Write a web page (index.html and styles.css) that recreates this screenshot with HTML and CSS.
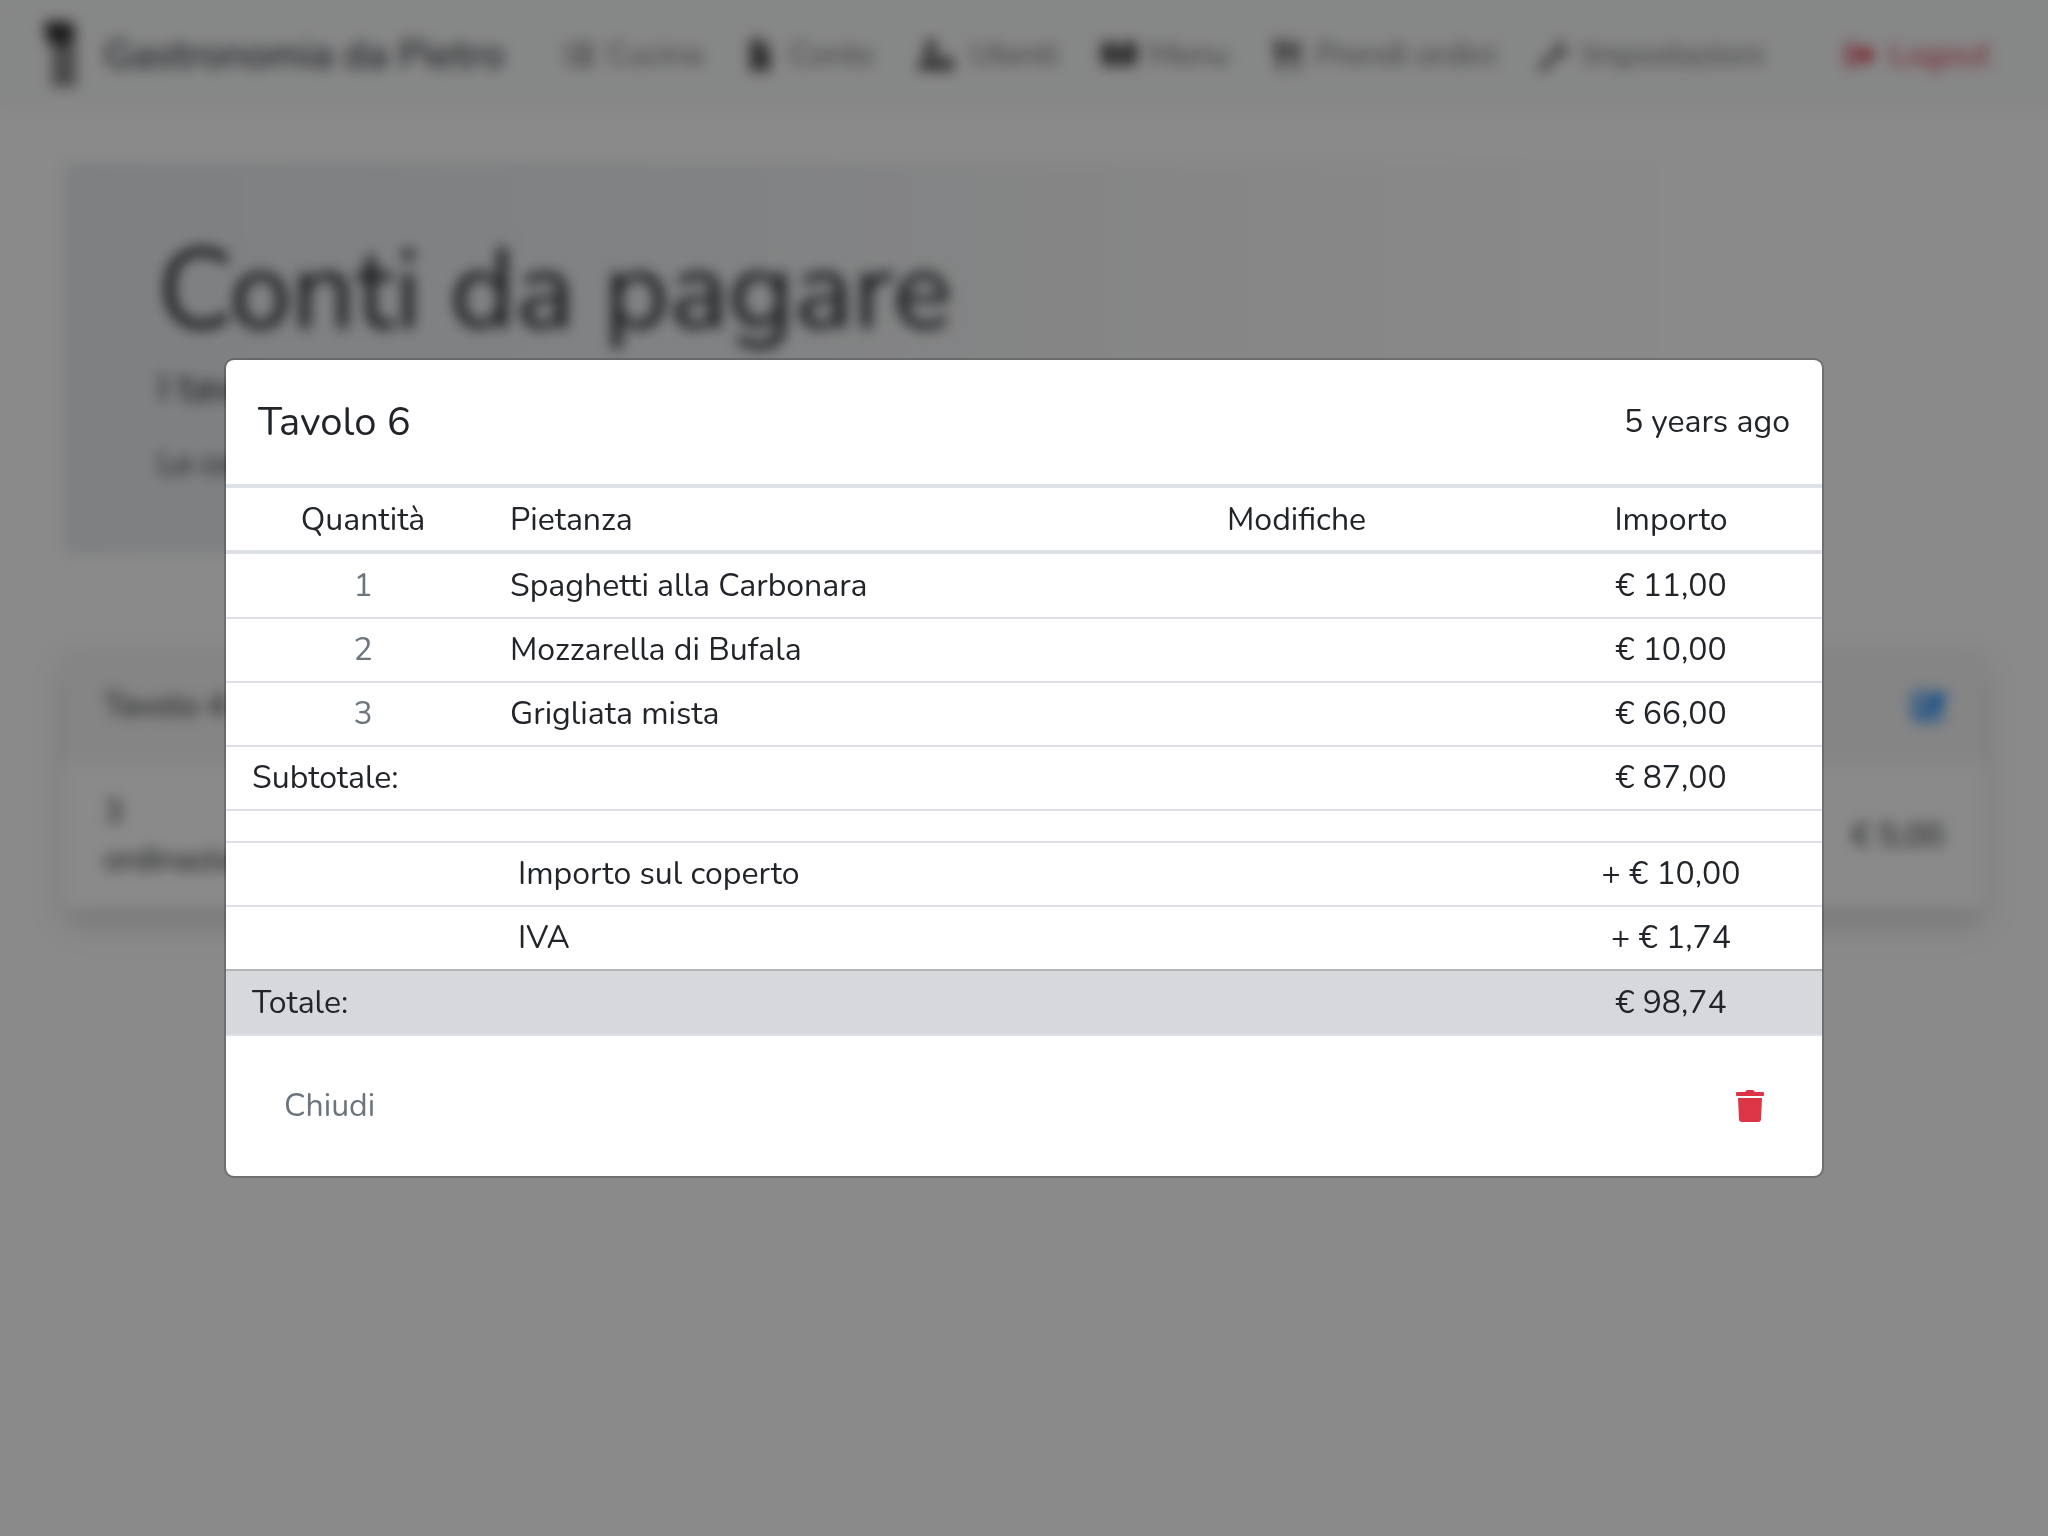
FILE: index.html
```html
<!DOCTYPE html>
<html lang="it">
<head>
<meta charset="utf-8">
<meta name="viewport" content="width=device-width, initial-scale=1">
<title>Conti da pagare</title>
<link rel="stylesheet" href="styles.css">
</head>
<body>
<div class="page">
  <header class="navbar">
    <a class="brand" href="#">
      <svg class="brand-icon" viewBox="0 0 38 68" aria-hidden="true"><path d="M3 10a9 9 0 0 1 16-8 9 9 0 0 1 14 9l-3 12H6z" fill="#333"/><path d="M10 23h24v43H10z" fill="#888"/></svg>
      <span>Gastronomia da Pietro</span>
    </a>
    <nav class="nav">
      <a class="nav-link" href="#"><svg class="icon" viewBox="0 0 32 32" aria-hidden="true"><path d="M1 5h5v4H1zM10 5h21v4H10zM1 14h5v4H1zM10 14h21v4H10zM1 23h5v4H1zM10 23h21v4H10z"/></svg>Cucina</a>
      <a class="nav-link" href="#"><svg class="icon dark" viewBox="0 0 32 32" aria-hidden="true"><path d="M5 0h12v9h8v23H5zM19 0l6 7h-6z"/></svg>Conto</a>
      <a class="nav-link" href="#"><svg class="icon icon-wide dark" viewBox="0 0 40 32" aria-hidden="true"><circle cx="14" cy="8" r="7"/><path d="M1 31c0-10 5-14 13-14 5 0 8 2 10 5a7 7 0 1 1 3 9z"/></svg>Utenti</a>
      <a class="nav-link" href="#"><svg class="icon icon-book dark" viewBox="2 0 36 32" aria-hidden="true"><path d="M2 3c7-1 13 0 17 3v23c-4-3-10-4-17-3zM38 3c-7-1-13 0-17 3v23c4-3 10-4 17-3z"/></svg>Menu</a>
      <a class="nav-link" href="#"><svg class="icon dark" viewBox="0 0 32 32" aria-hidden="true"><path d="M3 0h3v9h2V0h3v9h2V0h3v11c0 3-2 5-4 6v15H7V17c-2-1-4-3-4-6zM28 0v32h-4V20h-5C19 8 22 1 28 0z"/></svg>Prendi ordini</a>
      <a class="nav-link" href="#"><svg class="icon dark" viewBox="0 0 32 32" aria-hidden="true"><path d="M31 7a9 9 0 0 1-12 9L6 31a3 3 0 0 1-5-5l15-13A9 9 0 0 1 25 1l-5 5 1 5 5 1z"/></svg>Impostazioni</a>
    </nav>
    <a class="nav-link logout" href="#"><svg class="icon" viewBox="0 0 32 32" aria-hidden="true"><path d="M10 4H4a3 3 0 0 0-3 3v18a3 3 0 0 0 3 3h6v-4H5V8h5zM18 5l13 11-13 11v-7H9v-8h9z"/></svg>Logout</a>
  </header>
  <main class="content">
    <section class="jumbotron">
      <h1>Conti da pagare</h1>
      <p class="lead">I tavoli</p>
      <p class="note">Le comande</p>
    </section>
    <article class="card">
      <header class="card-header">
        <span>Tavolo 4</span>
        <a href="#" aria-label="Apri il conto"><svg class="edit-icon" viewBox="0 0 44 40" aria-hidden="true"><path d="M6 3h20l-5 5H7v25h25V23l5-5v15a5 5 0 0 1-5 5H6a5 5 0 0 1-5-5V8a5 5 0 0 1 5-5z"/><path d="M34 1l9 8-20 19-11 3 3-11z"/></svg></a>
      </header>
      <div class="card-body">
        <span class="orders">3 ordinazioni</span>
        <span>€ 5,00</span>
      </div>
    </article>
  </main>
</div>
<div class="backdrop">
  <section class="modal" role="dialog" aria-modal="true" aria-labelledby="bill-title">
    <header class="modal-header">
      <h2 id="bill-title">Tavolo 6</h2>
      <span>5 years ago</span>
    </header>
    <table class="bill">
      <colgroup><col class="col-qty"><col><col class="col-notes"><col class="col-amount"></colgroup>
      <thead>
        <tr><th class="center">Quantità</th><th>Pietanza</th><th class="center">Modifiche</th><th class="center">Importo</th></tr>
      </thead>
      <tbody>
        <tr><td class="center muted">1</td><td>Spaghetti alla Carbonara</td><td></td><td class="center">€ 11,00</td></tr>
        <tr><td class="center muted">2</td><td>Mozzarella di Bufala</td><td></td><td class="center">€ 10,00</td></tr>
        <tr><td class="center muted">3</td><td>Grigliata mista</td><td></td><td class="center">€ 66,00</td></tr>
        <tr><td class="label" colspan="3">Subtotale:</td><td class="center">€ 87,00</td></tr>
        <tr class="spacer"><td colspan="4"></td></tr>
        <tr><td></td><td class="extra" colspan="2">Importo sul coperto</td><td class="center">+ € 10,00</td></tr>
        <tr><td></td><td class="extra" colspan="2">IVA</td><td class="center">+ € 1,74</td></tr>
        <tr class="total"><td class="label" colspan="3">Totale:</td><td class="center">€ 98,74</td></tr>
      </tbody>
    </table>
    <footer class="modal-footer">
      <button class="btn muted" type="button">Chiudi</button>
      <button class="btn" type="button" aria-label="Elimina"><svg class="trash" viewBox="0 0 28 32" aria-hidden="true"><path d="M1 2h8l1-1 1-1h6l1 1 1 1h8q1 0 1 1v2q0 1-1 1H1Q0 6 0 5V3q0-1 1-1zM2 8h24l-1 21q0 3-3 3H6q-3 0-3-3z"/></svg></button>
    </footer>
  </section>
</div>
</body>
</html>
```
FILE: styles.css
```css
* { box-sizing: border-box; }
body {
  margin: 0;
  background: #fff;
  color: #212529;
  font: 32px/48px Nunito, Lato, sans-serif;
}
h1, h2, p { margin: 0; font-weight: 400; }
a { color: inherit; text-decoration: none; }
svg { display: block; flex: none; }

.navbar {
  display: flex;
  align-items: center;
  height: 110px;
  padding: 0 58px 0 42px;
  background: #f8f9fa;
}
.brand {
  display: flex;
  align-items: center;
  gap: 24px;
  margin-right: 58px;
  font-size: 40px;
  white-space: nowrap;
}
.brand-icon { width: 38px; height: 68px; }
.nav { display: flex; flex: 1; gap: 42px; }
.nav-link {
  display: flex;
  align-items: center;
  gap: 12px;
  color: #777;
  white-space: nowrap;
}
.icon { width: 32px; height: 32px; fill: currentColor; }
.icon-wide { width: 42px; }
.icon-book { width: 36px; }
.icon.dark { fill: #555; }
.logout, .logout .icon { color: #dc3545; }

.content { padding: 52px 64px; }
.jumbotron {
  height: 392px;
  margin-bottom: 94px;
  padding: 62px 94px;
  background: linear-gradient(to right, #e9ecef, #eff1f3 35%, #f8f8f8 60%, #fff 85%);
}
.jumbotron h1 { font-size: 112px; line-height: 136px; }
.lead { margin: 4px 0 28px; font-size: 40px; }
.note { font-size: 32px; }

.card { border-radius: 8px; box-shadow: 0 16px 32px rgba(0, 0, 0, .15); }
.card-header {
  display: flex;
  align-items: center;
  justify-content: space-between;
  height: 116px;
  padding: 0 36px 0 40px;
  background: #f5f5f5;
}
.edit-icon { width: 36px; height: 34px; fill: #007bff; }
.card-body {
  display: flex;
  align-items: center;
  justify-content: space-between;
  padding: 24px 40px;
}
.orders { width: min-content; }

.backdrop {
  position: fixed;
  inset: 0;
  display: flex;
  align-items: center;
  justify-content: center;
  background: rgba(0, 0, 0, .46);
  backdrop-filter: blur(7px);
}
.modal {
  width: 100%;
  max-width: 1600px;
  border: 2px solid rgba(0, 0, 0, .2);
  border-radius: 10px;
  background: #fff;
  background-clip: padding-box;
}
.modal-header {
  display: flex;
  align-items: center;
  justify-content: space-between;
  height: 124px;
  padding: 0 32px;
}
.modal-header h2 { font-size: 40px; }

.bill {
  width: 100%;
  table-layout: fixed;
  border-collapse: separate;
  border-spacing: 0;
}
.col-qty { width: 274px; }
.col-notes { width: 28%; }
.col-amount { width: 302px; }
.bill th, .bill td {
  height: 64px;
  padding: 0 10px;
  border-top: 2px solid #dee2e6;
  font-weight: 400;
  text-align: left;
}
.bill th {
  height: 70px;
  padding-top: 2px;
  border-top-width: 4px;
  border-bottom: 4px solid #dee2e6;
}
.bill tbody tr:first-child td { height: 63px; border-top: 0; }
.bill .spacer td { height: 32px; }
.bill .label { padding-left: 26px; }
.bill .extra { padding-left: 18px; }
.bill .center { text-align: center; }
.bill .total td {
  height: 67px;
  border-top-color: #b3b5b9;
  border-bottom: 2px solid #dee2e6;
  background: #d6d8db;
}
.bill .muted { color: #6c757d; }

.modal-footer {
  display: flex;
  align-items: center;
  justify-content: space-between;
  height: 140px;
  padding: 0 32px;
}
.btn {
  padding: 12px 26px;
  border: 0;
  background: none;
  font: inherit;
}
.btn.muted { color: #6c757d; }
.trash { width: 28px; height: 32px; fill: #dc3545; }
```
